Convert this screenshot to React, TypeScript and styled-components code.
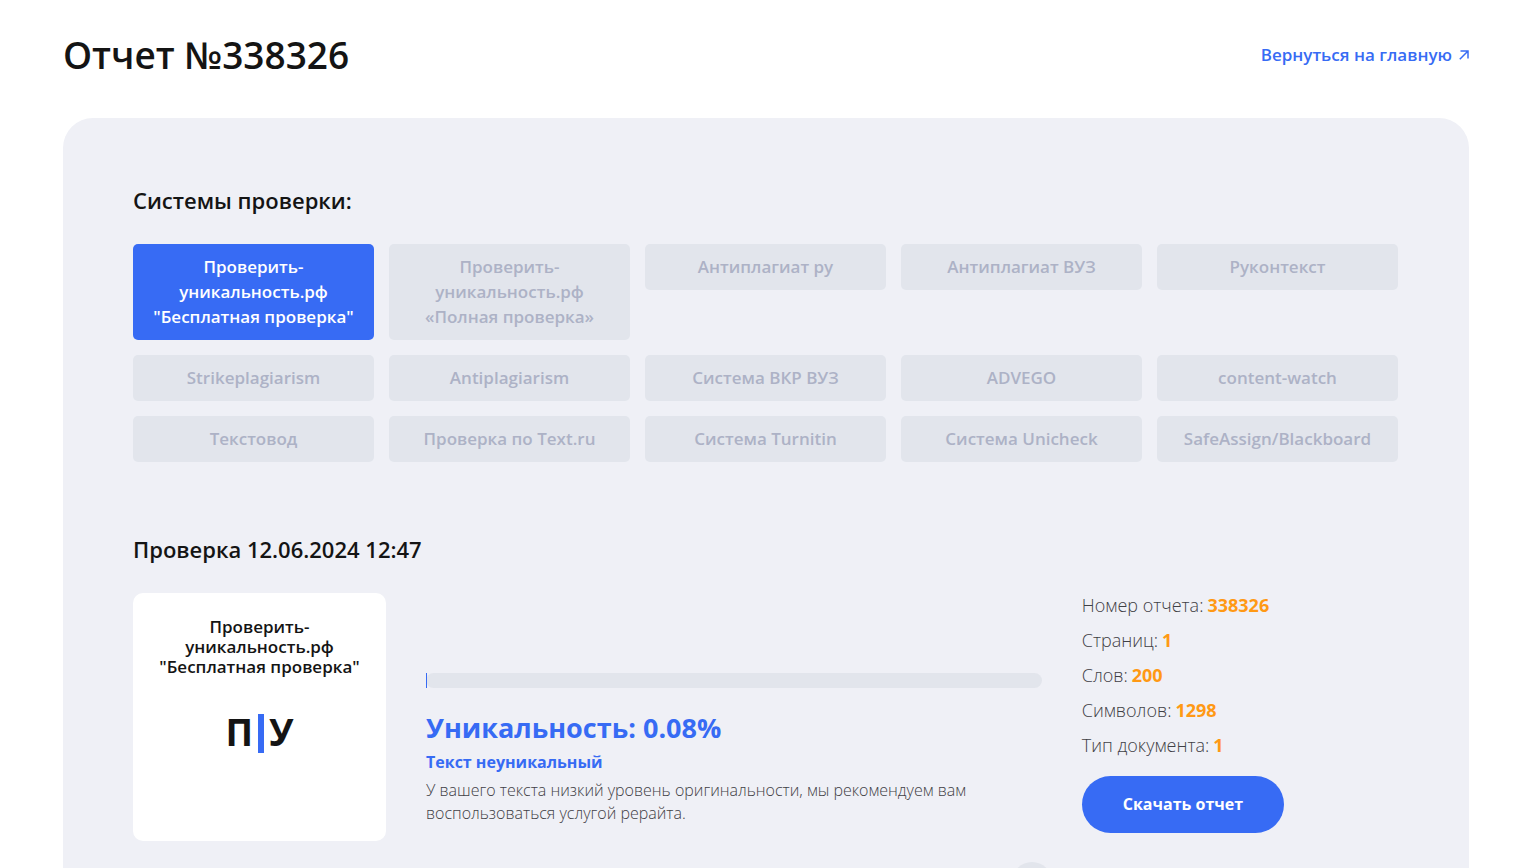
import React from 'react';
import styled, { createGlobalStyle } from 'styled-components';

const GlobalStyle = createGlobalStyle`
  *, *::before, *::after { box-sizing: border-box; }
  html { scrollbar-width: none; }
  body {
    margin: 0;
    background: #fff;
    color: #141414;
    font-family: "Open Sans", "Noto Sans", sans-serif;
    font-size: 16px;
  }
  h1, h2, h3, p, ul, dl, dd { margin: 0; padding: 0; }
`;

const Page = styled.div`
  padding: 31px 64px 0 63px;
`;

const Header = styled.header`
  display: flex;
  align-items: center;
  justify-content: space-between;
  margin-bottom: 39px;
`;

const Title = styled.h1`
  font-size: 37px;
  line-height: 48px;
  font-weight: 600;
`;

const BackLink = styled.a`
  display: inline-flex;
  align-items: center;
  gap: 7px;
  color: #376bf4;
  font-size: 17px;
  line-height: 24px;
  font-weight: 600;
  text-decoration: none;
`;

const Panel = styled.main`
  padding: 69px 71px 60px 70px;
  border-radius: 30px 30px 0 0;
  background: #eff0f6;
`;

const SectionTitle = styled.h2`
  margin-bottom: 31px;
  font-size: 22px;
  line-height: 26px;
  font-weight: 600;
`;

const Systems = styled.div`
  display: grid;
  grid-template-columns: repeat(5, 1fr);
  align-items: start;
  gap: 15px;
  margin-bottom: 74px;
`;

const SystemButton = styled.button<{ $active?: boolean }>`
  padding: 10px 15px 11px;
  border: 0;
  border-radius: 5px;
  background: ${(p) => (p.$active ? '#376bf4' : '#e2e5ec')};
  color: ${(p) => (p.$active ? '#fff' : '#adb2c6')};
  font: inherit;
  font-size: 17px;
  line-height: 25px;
  font-weight: 600;
  cursor: pointer;
`;

const Report = styled.div`
  display: flex;
  align-items: flex-start;
  gap: 40px;
`;

const Card = styled.article`
  flex: 0 0 20%;
  display: flex;
  flex-direction: column;
  align-items: center;
  gap: 37px;
  min-height: 248px;
  padding: 24px 20px;
  border-radius: 10px;
  background: #fff;
`;

const CardTitle = styled.h3`
  font-size: 17px;
  line-height: 20px;
  font-weight: 600;
  text-align: center;
`;

const Logo = styled.div`
  display: flex;
  align-items: flex-start;
  gap: 5px;
  font-size: 37px;
  line-height: 36px;
  font-weight: 700;
`;

const LogoBar = styled.span`
  width: 6px;
  height: 39px;
  background: #376bf4;
`;

const Result = styled.section`
  flex: 1;
  padding-top: 80px;
`;

const Track = styled.div`
  height: 15px;
  margin-bottom: 22px;
  border-radius: 8px;
  background: #e2e5ec;
`;

const Fill = styled.div`
  min-width: 1px;
  height: 100%;
  background: #376bf4;
`;

const Score = styled.p`
  color: #376bf4;
  font-size: 27px;
  line-height: 36px;
  font-weight: 700;
`;

const Verdict = styled.p`
  margin: 4px 0 5px;
  color: #376bf4;
  font-size: 16px;
  line-height: 24px;
  font-weight: 700;
`;

const Advice = styled.p`
  color: #3f4045;
  font-size: 16px;
  line-height: 23px;
  font-weight: 300;
`;

const Side = styled.aside`
  flex: 0 0 25%;
`;

const Facts = styled.dl`
  display: grid;
  gap: 10px;
  margin-bottom: 18px;
`;

const Fact = styled.div`
  display: flex;
  gap: 4px;
  font-size: 18px;
  line-height: 25px;
`;

const FactName = styled.dt`
  color: #3f4045;
  font-weight: 300;
`;

const FactValue = styled.dd`
  color: #ff9914;
  font-weight: 700;
`;

const Download = styled.button`
  padding: 16px 41px 17px;
  border: 0;
  border-radius: 29px;
  background: #376bf4;
  color: #fff;
  font: inherit;
  font-size: 16px;
  line-height: 24px;
  font-weight: 700;
  cursor: pointer;
`;

const MoreRow = styled.div`
  display: flex;
  justify-content: flex-end;
  padding: 21px calc(25% + 30px) 0 0;
`;

const MoreButton = styled.button`
  width: 40px;
  height: 40px;
  border: 0;
  border-radius: 50%;
  background: #e2e5ec;
  cursor: pointer;
`;

const systems = [
  'Проверить-уникальность.рф "Бесплатная проверка"',
  'Проверить-уникальность.рф «Полная проверка»',
  'Антиплагиат ру',
  'Антиплагиат ВУЗ',
  'Руконтекст',
  'Strikeplagiarism',
  'Antiplagiarism',
  'Система ВКР ВУЗ',
  'ADVEGO',
  'content-watch',
  'Текстовод',
  'Проверка по Text.ru',
  'Система Turnitin',
  'Система Unicheck',
  'SafeAssign/Blackboard',
];

const facts: [string, string][] = [
  ['Номер отчета:', '338326'],
  ['Страниц:', '1'],
  ['Слов:', '200'],
  ['Символов:', '1298'],
  ['Тип документа:', '1'],
];

const uniqueness = 0.08;

export default function App() {
  return (
    <Page>
      <GlobalStyle />
      <Header>
        <Title>Отчет №338326</Title>
        <BackLink href="#">
          Вернуться на главную
          <svg width="10" height="10" viewBox="0 0 10 10" fill="none" stroke="currentColor" strokeWidth="1.5" aria-hidden="true">
            <path d="M1.5 1H9v7.5M9 1 .8 9.2" />
          </svg>
        </BackLink>
      </Header>
      <Panel>
        <SectionTitle>Системы проверки:</SectionTitle>
        <Systems>
          {systems.map((name, i) => (
            <SystemButton key={name} type="button" $active={i === 0}>
              {name}
            </SystemButton>
          ))}
        </Systems>
        <SectionTitle>Проверка 12.06.2024 12:47</SectionTitle>
        <Report>
          <Card>
            <CardTitle>{systems[0]}</CardTitle>
            <Logo>
              <span>П</span>
              <LogoBar />
              <span>У</span>
            </Logo>
          </Card>
          <Result>
            <Track>
              <Fill style={{ width: `${uniqueness}%` }} />
            </Track>
            <Score>Уникальность: {uniqueness}%</Score>
            <Verdict>Текст неуникальный</Verdict>
            <Advice>
              У вашего текста низкий уровень оригинальности, мы рекомендуем вам воспользоваться услугой рерайта.
            </Advice>
          </Result>
          <Side>
            <Facts>
              {facts.map(([name, value]) => (
                <Fact key={name}>
                  <FactName>{name}</FactName>
                  <FactValue>{value}</FactValue>
                </Fact>
              ))}
            </Facts>
            <Download type="button">Скачать отчет</Download>
          </Side>
        </Report>
        <MoreRow>
          <MoreButton type="button" aria-label="Подробнее" />
        </MoreRow>
      </Panel>
    </Page>
  );
}
